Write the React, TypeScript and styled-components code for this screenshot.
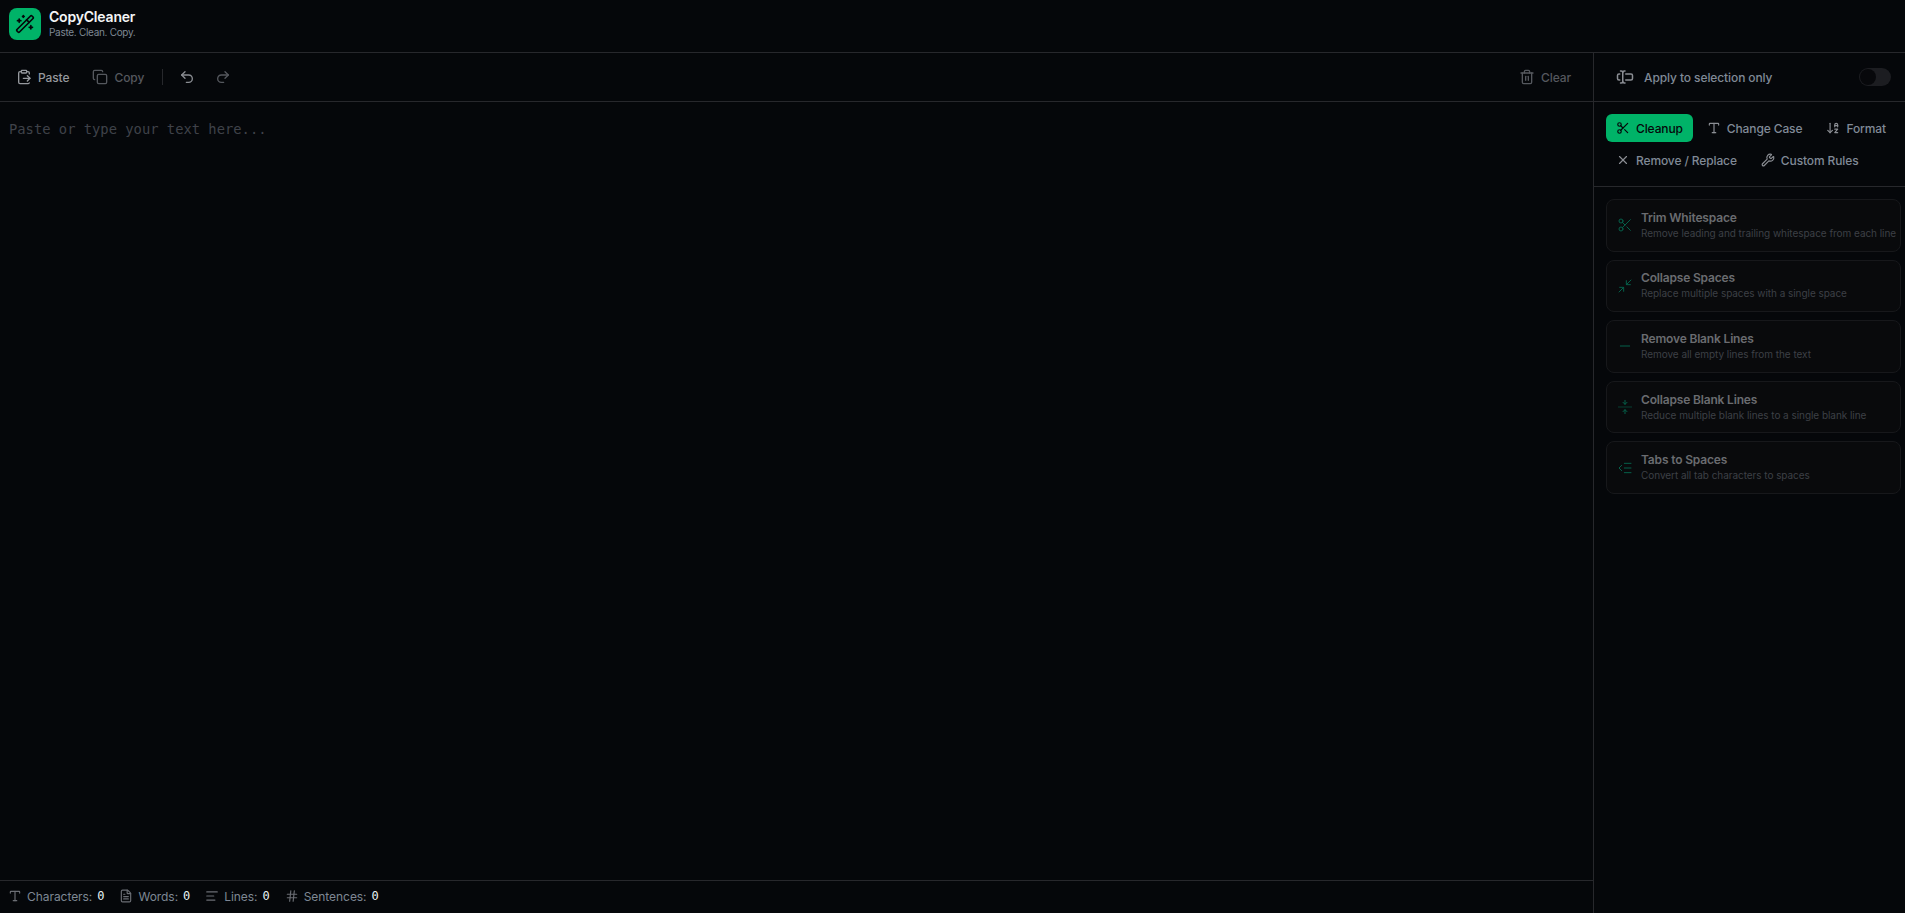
import React from "react";
import styled, { createGlobalStyle } from "styled-components";
import {
  WandSparkles, ClipboardPaste, Copy, Undo2, Redo2, Trash2, TextCursorInput, Scissors, Type,
  ArrowDownAZ, X, Wrench, Minimize2, Minus, ListIndentDecrease, FileText, AlignLeft, Hash,
} from "lucide-react";

const Global = createGlobalStyle`
  html, body { margin: 0; height: 100%; background: #05070a; }
  body { font-family: Inter, "Liberation Sans", sans-serif; color: #e8eaed; }
  #root { height: 100%; }
  * { box-sizing: border-box; }
`;

const Page = styled.div`
  display: flex; flex-direction: column; height: 913px; overflow: hidden; background: #05070a;
`;
const Header = styled.header`
  height: 53px; flex: none; display: flex; align-items: flex-start; gap: 8px; padding: 8px 9px 0;
  border-bottom: 1px solid #27282c;
`;
const Logo = styled.div`
  width: 32px; height: 32px; border-radius: 8px; background: #00b368; color: #05070a;
  display: flex; align-items: center; justify-content: center;
`;
const Brand = styled.div`display: flex; flex-direction: column;`;
const BrandName = styled.div`font-size: 14px; line-height: 17px; font-weight: 600; color: #f4f5f6; letter-spacing: -0.2px;`;
const Tagline = styled.div`font-size: 10px; line-height: 15px; color: #7e8794; letter-spacing: -0.3px;`;
const Body = styled.div`flex: 1; display: flex; min-height: 0;`;
const Editor = styled.main`flex: 1; min-width: 0; display: flex; flex-direction: column;`;
const Toolbar = styled.div`
  height: 49px; flex: none; display: flex; align-items: center; padding: 0 14px 0 8px; gap: 7px;
  border-bottom: 1px solid #27282c;
`;
const ToolButton = styled.button<{ $tone?: string; $square?: boolean }>`
  height: 32px; display: flex; align-items: center; gap: 6px; background: none; border: 0;
  padding: 0 ${(p) => (p.$square ? "6px" : "8px")}; font: 500 12px Inter, sans-serif; letter-spacing: -0.1px;
  color: ${(p) => p.$tone ?? "#55585e"};
`;
const Divider = styled.div`width: 1px; height: 16px; background: #27282c; margin: 0 3px;`;
const UndoGroup = styled.div`display: flex; gap: 8px;`;
const Spacer = styled.div`flex: 1;`;
const TextArea = styled.textarea`
  flex: 1; resize: none; background: none; border: 0; outline: 0; padding: 17px 9px;
  font: 13.8px/20px "DejaVu Sans Mono", "Liberation Mono", monospace; color: #e8eaed;
  &::placeholder { color: #3f4249; opacity: 1; }
`;
const Status = styled.footer`
  height: 33px; flex: none; display: flex; align-items: center; gap: 15px; padding: 0 8px 2px;
  border-top: 1px solid #27282c; font-size: 12px; color: #7e8794; letter-spacing: -0.05px;
`;
const Stat = styled.div`display: flex; align-items: center; gap: 5px; svg { color: #6b6e74; }`;
const StatValue = styled.span`font-family: "DejaVu Sans Mono", monospace; font-weight: 500; font-size: 12px; line-height: 14px; color: #e6f2f2;`;
const Panel = styled.aside`
  width: 312px; flex: none; border-left: 1px solid #27282c; display: flex; flex-direction: column; min-width: 0;
`;
const SelectionRow = styled.div`
  height: 49px; flex: none; display: flex; align-items: center; gap: 10px; padding: 0 14px 0 22px;
  border-bottom: 1px solid #27282c; font-size: 12px; font-weight: 500; color: #808a97; letter-spacing: -0.1px;
  svg { color: #8b8e94; }
`;
const Toggle = styled.div`
  margin-left: auto; width: 32px; height: 18px; border-radius: 9px; background: #1c1d21; padding: 1px;
`;
const Knob = styled.div`width: 16px; height: 16px; border-radius: 50%; background: #07080b;`;
const Tabs = styled.div`
  flex: none; display: flex; flex-wrap: wrap; gap: 4px; padding: 12px 5px 12px 12px;
  border-bottom: 1px solid #27282c;
`;
const Tab = styled.button<{ $active?: boolean }>`
  height: 28px; display: flex; align-items: center; gap: 6px; padding: 0 10px; border: 0; border-radius: 6px;
  font: 500 12px Inter, sans-serif; letter-spacing: -0.12px;
  background: ${(p) => (p.$active ? "#00b368" : "transparent")};
  color: ${(p) => (p.$active ? "#05070a" : "#808a97")};
  svg { color: ${(p) => (p.$active ? "#05070a" : "#8b8e94")}; }
`;
const Cards = styled.div`display: flex; flex-direction: column; gap: 8px; padding: 12px 0 0 12px; align-items: flex-start;`;
const Card = styled.div`
  width: 295px; height: 52.6px; display: flex; align-items: center; gap: 8px; padding: 0 10px;
  border: 1px solid #17181b; border-radius: 8px; background: #090a0c;
`;
const CardIcon = styled.div`color: #05604a; display: flex; flex: none;`;
const CardText = styled.div`display: flex; flex-direction: column; min-width: 0;`;
const CardTitle = styled.div`font-size: 12px; line-height: 16px; font-weight: 600; color: #6a6c70; white-space: nowrap; letter-spacing: -0.17px;`;
const CardDesc = styled.div`font-size: 10px; line-height: 15px; color: #3d4046; white-space: nowrap; letter-spacing: -0.05px;`;

type IconProps = { size?: number; strokeWidth?: number };
const CollapseLines = ({ size = 16, strokeWidth = 1.5 }: IconProps) => (
  <svg width={size} height={size} viewBox="0 0 24 24" fill="none" stroke="currentColor" strokeWidth={strokeWidth} strokeLinecap="round" strokeLinejoin="round">
    <path d="M2 12h20" opacity={0.6} />
    <path d="M12 2v6M12 22v-6" />
    <path d="m9 5 3 3 3-3M9 19l3-3 3 3" />
  </svg>
);

const cards = [
  { icon: Scissors, title: "Trim Whitespace", desc: "Remove leading and trailing whitespace from each line" },
  { icon: Minimize2, title: "Collapse Spaces", desc: "Replace multiple spaces with a single space" },
  { icon: Minus, title: "Remove Blank Lines", desc: "Remove all empty lines from the text" },
  { icon: CollapseLines, title: "Collapse Blank Lines", desc: "Reduce multiple blank lines to a single blank line" },
  { icon: ListIndentDecrease, title: "Tabs to Spaces", desc: "Convert all tab characters to spaces" },
];
const stats = [
  { icon: Type, label: "Characters:" },
  { icon: FileText, label: "Words:" },
  { icon: AlignLeft, label: "Lines:" },
  { icon: Hash, label: "Sentences:" },
];

export default function App() {
  return (
    <Page>
      <Global />
      <Header>
        <Logo><WandSparkles size={20} strokeWidth={2} /></Logo>
        <Brand>
          <BrandName>CopyCleaner</BrandName>
          <Tagline>Paste. Clean. Copy.</Tagline>
        </Brand>
      </Header>
      <Body>
        <Editor>
          <Toolbar>
            <ToolButton $tone="#96999e"><ClipboardPaste size={16} />Paste</ToolButton>
            <ToolButton><Copy size={16} />Copy</ToolButton>
            <Divider />
            <UndoGroup>
              <ToolButton $square $tone="#8a8d92"><Undo2 size={16} /></ToolButton>
              <ToolButton $square><Redo2 size={16} /></ToolButton>
            </UndoGroup>
            <Spacer />
            <ToolButton><Trash2 size={16} />Clear</ToolButton>
          </Toolbar>
          <TextArea placeholder="Paste or type your text here..." />
          <Status>
            {stats.map(({ icon: Icon, label }) => (
              <Stat key={label}><Icon size={14} /><span>{label}</span><StatValue>0</StatValue></Stat>
            ))}
          </Status>
        </Editor>
        <Panel>
          <SelectionRow>
            <TextCursorInput size={18} />
            <span>Apply to selection only</span>
            <Toggle><Knob /></Toggle>
          </SelectionRow>
          <Tabs>
            <Tab $active><Scissors size={14} />Cleanup</Tab>
            <Tab><Type size={14} />Change Case</Tab>
            <Tab><ArrowDownAZ size={14} />Format</Tab>
            <Tab><X size={14} />Remove / Replace</Tab>
            <Tab><Wrench size={14} />Custom Rules</Tab>
          </Tabs>
          <Cards>
            {cards.map(({ icon: Icon, title, desc }) => (
              <Card key={title}>
                <CardIcon><Icon size={16} strokeWidth={1.5} /></CardIcon>
                <CardText>
                  <CardTitle>{title}</CardTitle>
                  <CardDesc>{desc}</CardDesc>
                </CardText>
              </Card>
            ))}
          </Cards>
        </Panel>
      </Body>
    </Page>
  );
}
